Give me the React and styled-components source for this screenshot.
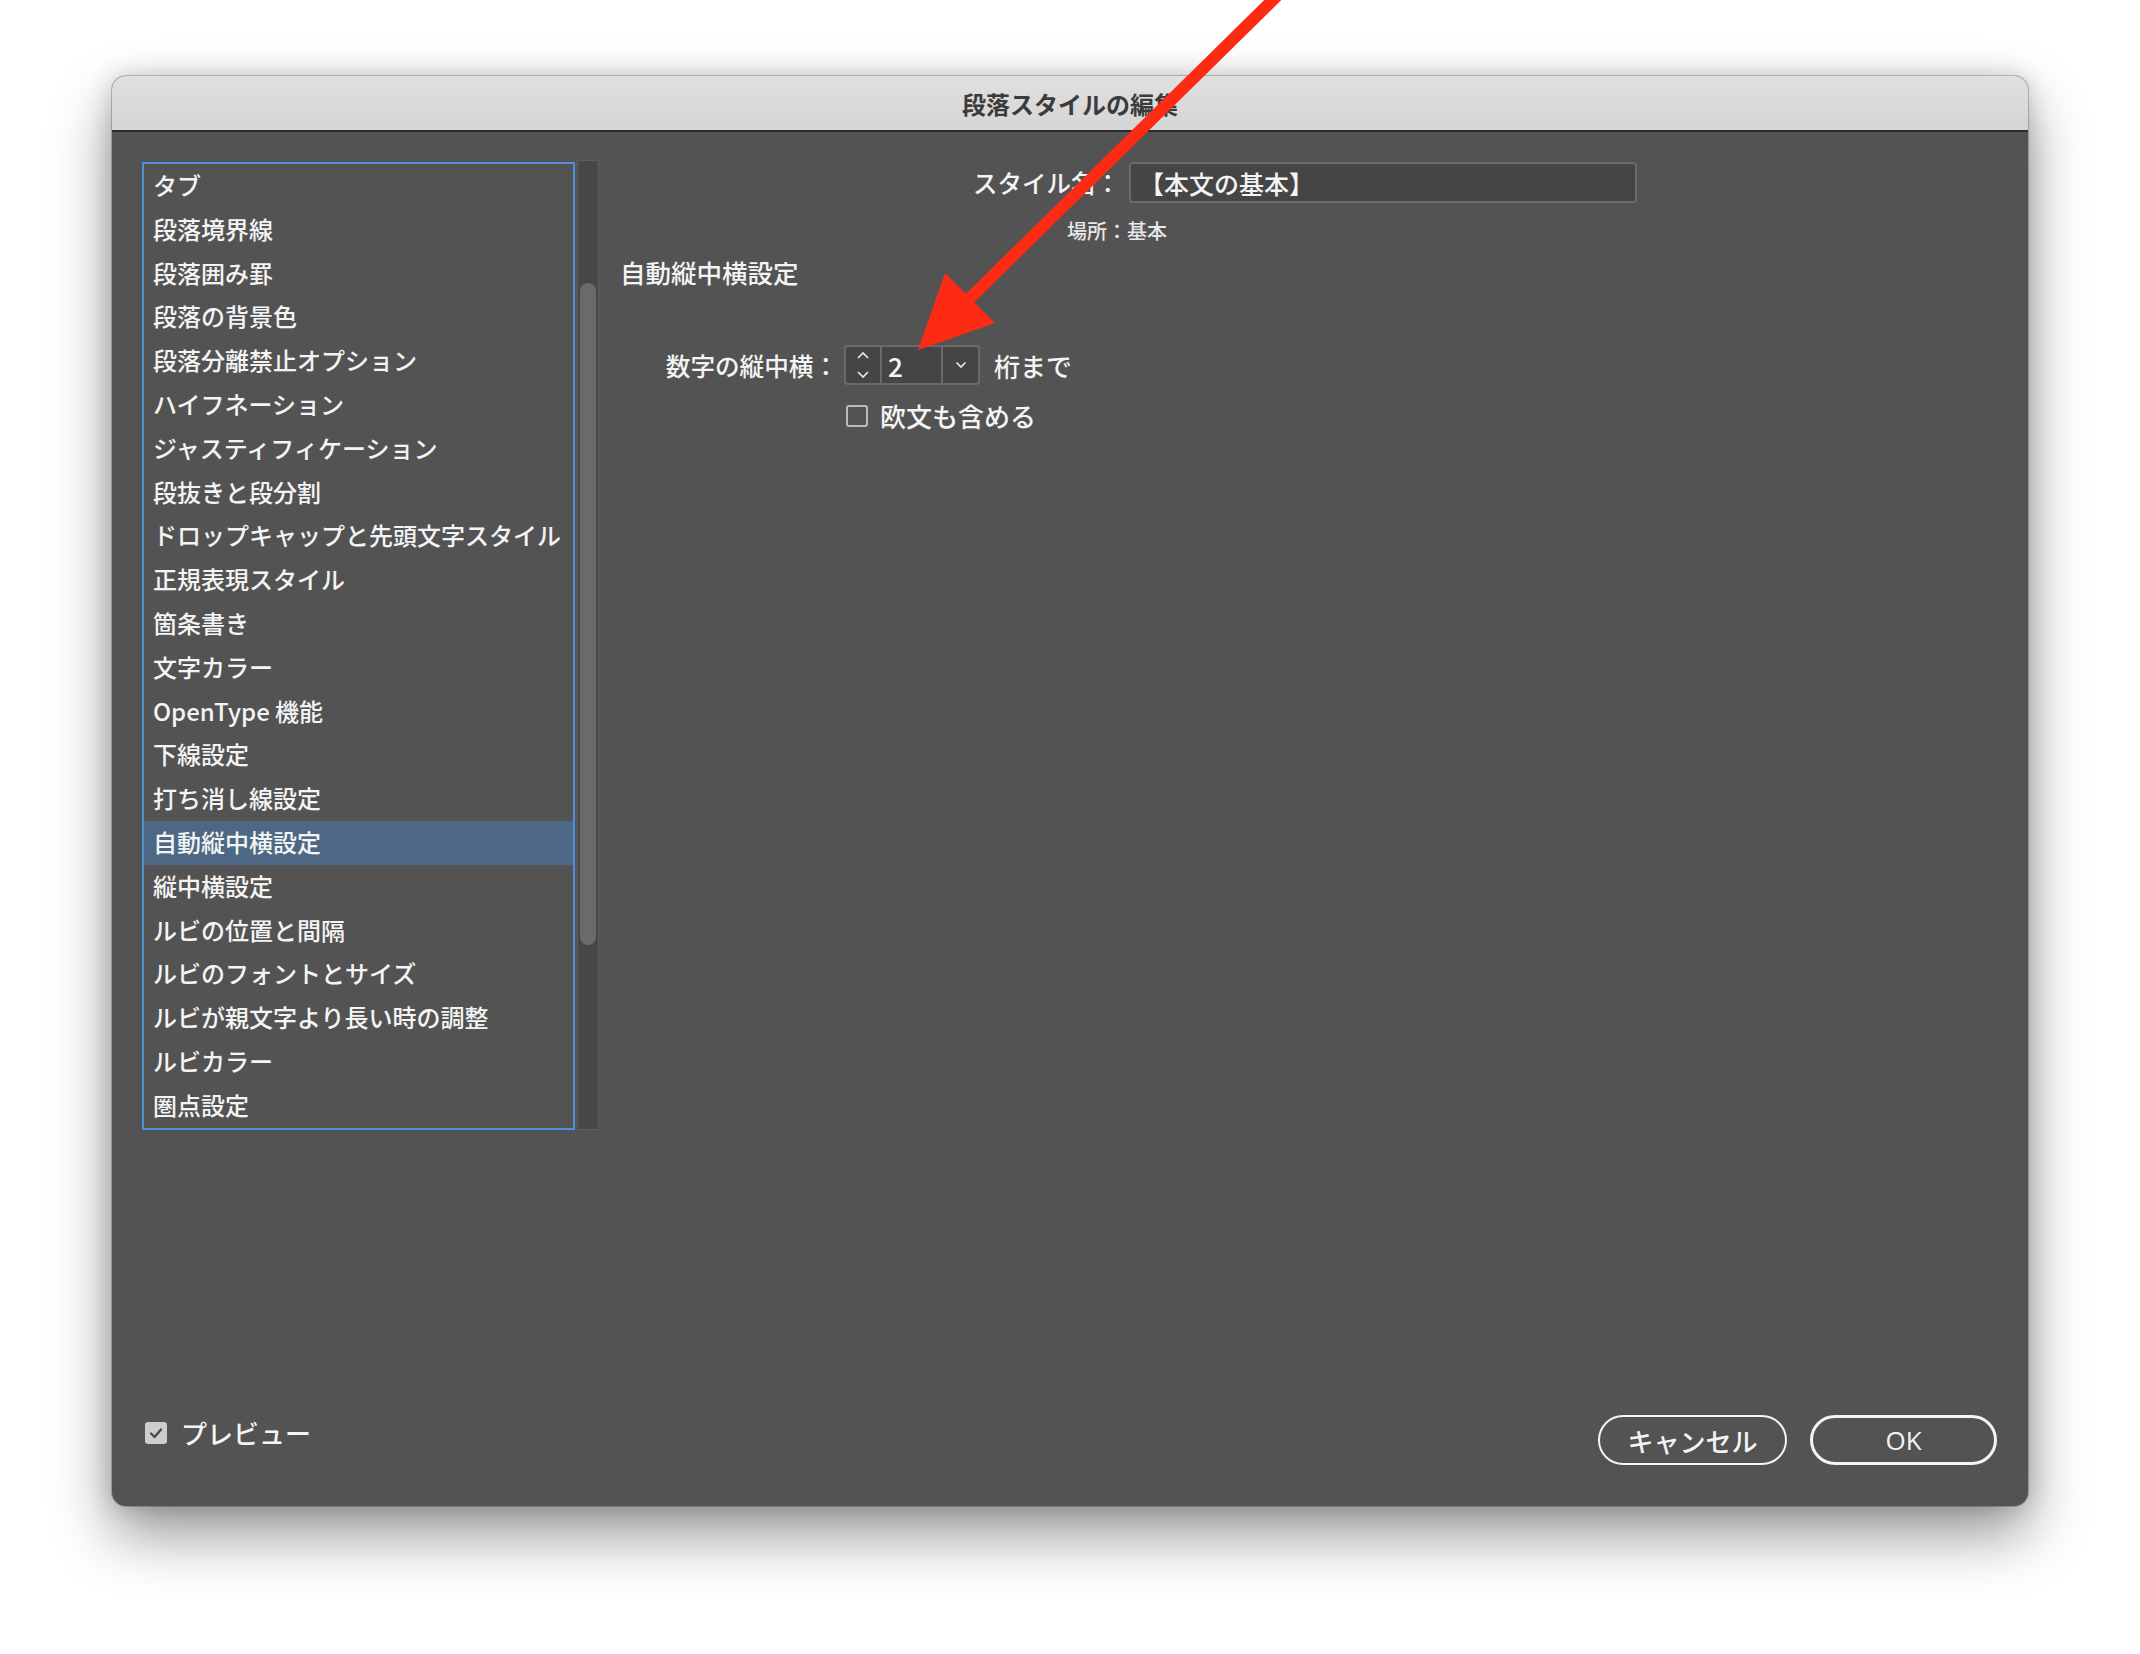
import React from 'react';
import styled, { createGlobalStyle } from 'styled-components';

const GlobalStyle = createGlobalStyle`
  html, body {
    margin: 0;
    padding: 0;
    background: #ffffff;
  }
  body {
    font-family: "Noto Sans CJK JP", "Open Sans", sans-serif;
    -webkit-font-smoothing: antialiased;
  }
`;

const ITEMS = [
  'タブ',
  '段落境界線',
  '段落囲み罫',
  '段落の背景色',
  '段落分離禁止オプション',
  'ハイフネーション',
  'ジャスティフィケーション',
  '段抜きと段分割',
  'ドロップキャップと先頭文字スタイル',
  '正規表現スタイル',
  '箇条書き',
  '文字カラー',
  'OpenType 機能',
  '下線設定',
  '打ち消し線設定',
  '自動縦中横設定',
  '縦中横設定',
  'ルビの位置と間隔',
  'ルビのフォントとサイズ',
  'ルビが親文字より長い時の調整',
  'ルビカラー',
  '圏点設定',
];

const SELECTED = '自動縦中横設定';

const App = () => {
  return (
    <Page>
      <GlobalStyle />
      <Dialog>
        <TitleBar>段落スタイルの編集</TitleBar>
        <Body>
          <MainRow>
            <ListColumn>
              <ListBox>
                {ITEMS.map((item) => (
                  <ListItem key={item} selected={item === SELECTED}>
                    {item}
                  </ListItem>
                ))}
              </ListBox>
              <ScrollTrack>
                <ScrollThumb />
              </ScrollTrack>
            </ListColumn>

            <Panel>
              <StyleRow>
                <StyleLabel>スタイル名：</StyleLabel>
                <NameInput>【本文の基本】</NameInput>
              </StyleRow>
              <Location>場所：基本</Location>
              <SectionTitle>自動縦中横設定</SectionTitle>
              <Separator />
              <DigitRow>
                <DigitLabel>数字の縦中横：</DigitLabel>
                <Spinner>
                  <SpinButtons>
                    <svg width="16" height="32" viewBox="0 0 16 32">
                      <path d="M3 9 L8 4 L13 9" fill="none" stroke="#e6e6e6" strokeWidth="1.7" />
                      <path d="M3 23 L8 28 L13 23" fill="none" stroke="#e6e6e6" strokeWidth="1.7" />
                    </svg>
                  </SpinButtons>
                  <SpinValue>2</SpinValue>
                  <SpinDrop>
                    <svg width="16" height="10" viewBox="0 0 16 10">
                      <path d="M3.5 2.5 L8 7 L12.5 2.5" fill="none" stroke="#e6e6e6" strokeWidth="1.7" />
                    </svg>
                  </SpinDrop>
                </Spinner>
                <Suffix>桁まで</Suffix>
              </DigitRow>
              <CheckRow>
                <CheckBox />
                <CheckText>欧文も含める</CheckText>
              </CheckRow>
            </Panel>
          </MainRow>

          <Footer>
            <PreviewToggle>
              <CheckBox checked>
                <svg width="16" height="14" viewBox="0 0 16 14">
                  <path d="M3 7.5 L6.5 11 L13 3.5" fill="none" stroke="#4a4a4a" strokeWidth="2.4" strokeLinecap="round" strokeLinejoin="round" />
                </svg>
              </CheckBox>
              <CheckText>プレビュー</CheckText>
            </PreviewToggle>
            <Buttons>
              <Button>キャンセル</Button>
              <Button primary>OK</Button>
            </Buttons>
          </Footer>
        </Body>
      </Dialog>

      <Arrow width="2140" height="1654" viewBox="0 0 2140 1654">
        <line x1="1285" y1="-12" x2="962" y2="306" stroke="#fe2b14" strokeWidth="12" />
        <polygon points="918,350 945,273 995,323" fill="#fe2b14" />
      </Arrow>
    </Page>
  );
};

export default App;

const Page = styled.div`
  position: relative;
  width: 2140px;
  height: 1654px;
  padding: 76px 0 0 112px;
  box-sizing: border-box;
  overflow: hidden;
`;

const Dialog = styled.div`
  width: 1916px;
  height: 1430px;
  display: flex;
  flex-direction: column;
  background: #535353;
  border-radius: 14px;
  overflow: hidden;
  box-shadow: 0 28px 60px rgba(0, 0, 0, 0.42), 0 0 24px rgba(0, 0, 0, 0.18),
    0 0 0 1px rgba(0, 0, 0, 0.2);
`;

const TitleBar = styled.div`
  height: 54px;
  flex: 0 0 auto;
  display: flex;
  align-items: center;
  justify-content: center;
  background: linear-gradient(#e0e0e0, #d5d5d5);
  border-top: 1px solid #c4c4c4;
  border-bottom: 2px solid #2b2b2b;
  box-sizing: content-box;
  margin-top: -1px;
  color: #3b3b3b;
  font-size: 24px;
  font-weight: 700;
`;

const Body = styled.div`
  flex: 1;
  display: flex;
  flex-direction: column;
  justify-content: space-between;
  padding: 30px 31px 41px 30px;
  color: #f4f4f4;
  font-weight: 500;
`;

const MainRow = styled.div`
  display: flex;
  gap: 21px;
`;

const ListColumn = styled.div`
  display: flex;
  align-items: stretch;
`;

const ListBox = styled.div`
  width: 429px;
  border: 2px solid #4d90dc;
  display: flex;
  flex-direction: column;
`;

const ListItem = styled.div`
  height: 43.8px;
  line-height: 41px;
  padding-left: 9px;
  font-size: 24px;
  white-space: nowrap;
  color: #f4f4f4;
  background: ${(props) => (props.selected ? '#4c6884' : 'transparent')};
`;

const ScrollTrack = styled.div`
  width: 22px;
  margin-left: 2px;
  margin-top: -2px;
  background: #474747;
  border: 1px solid #5d5d5d;
  padding: 0 2px;
  box-sizing: border-box;
`;

const ScrollThumb = styled.div`
  margin-top: 122px;
  height: 662px;
  border-radius: 10px;
  background: #6a6a6a;
`;

const Panel = styled.div`
  flex: 1;
  display: flex;
  flex-direction: column;
`;

const StyleRow = styled.div`
  display: flex;
  align-items: center;
  height: 41px;
`;

const StyleLabel = styled.div`
  width: 500px;
  text-align: right;
  font-size: 24.5px;
  margin-right: 9px;
`;

const NameInput = styled.div`
  width: 508px;
  height: 41px;
  box-sizing: border-box;
  border: 2px solid #6b6b6b;
  border-radius: 4px;
  background: #454545;
  padding-left: 8px;
  display: flex;
  align-items: center;
  font-size: 25px;
  color: #f4f4f4;
`;

const Location = styled.div`
  margin-top: 15px;
  padding-left: 447px;
  font-size: 20px;
  line-height: 26px;
  color: #e8e8e8;
`;

const SectionTitle = styled.div`
  margin-top: 12px;
  font-size: 25.5px;
  line-height: 32px;
`;

const Separator = styled.div`
  margin-top: 17px;
  margin-right: 20px;
  border-top: 2px dotted #4f4f4f;
`;

const DigitRow = styled.div`
  margin-top: 38px;
  display: flex;
  align-items: center;
`;

const DigitLabel = styled.div`
  width: 218px;
  text-align: right;
  font-size: 24.6px;
  margin-right: 6px;
`;

const Spinner = styled.div`
  display: flex;
  height: 40px;
  box-sizing: border-box;
  border: 2px solid #6a6a6a;
  border-radius: 4px;
  background: #454545;
  overflow: hidden;
`;

const SpinButtons = styled.div`
  width: 34px;
  display: flex;
  align-items: center;
  justify-content: center;
  border-right: 2px solid #6a6a6a;
`;

const SpinValue = styled.div`
  width: 61px;
  padding-left: 6px;
  box-sizing: border-box;
  display: flex;
  align-items: center;
  font-size: 26px;
  color: #f6f6f6;
  border-right: 2px solid #6a6a6a;
`;

const SpinDrop = styled.div`
  width: 35px;
  display: flex;
  align-items: center;
  justify-content: center;
`;

const Suffix = styled.div`
  margin-left: 14px;
  font-size: 26px;
`;

const CheckRow = styled.div`
  margin-top: 16px;
  padding-left: 226px;
  display: flex;
  align-items: center;
  gap: 12px;
`;

const CheckBox = styled.div`
  width: 22px;
  height: 22px;
  box-sizing: border-box;
  border-radius: 3px;
  display: flex;
  align-items: center;
  justify-content: center;
  border: ${(props) => (props.checked ? 'none' : '2px solid #b9b9b9')};
  background: ${(props) => (props.checked ? '#cdcdcd' : 'transparent')};
`;

const CheckText = styled.div`
  font-size: 26px;
  line-height: 30px;
`;

const Footer = styled.div`
  display: flex;
  align-items: center;
  justify-content: space-between;
  padding-left: 3px;
`;

const PreviewToggle = styled.div`
  display: flex;
  align-items: center;
  gap: 14px;
  padding-bottom: 14px;
`;

const Buttons = styled.div`
  display: flex;
  gap: 23px;
`;

const Button = styled.div`
  width: ${(props) => (props.primary ? '187px' : '189px')};
  height: 50px;
  box-sizing: border-box;
  border: ${(props) => (props.primary ? '3px' : '2px')} solid #f4f4f4;
  border-radius: 25px;
  display: flex;
  align-items: center;
  justify-content: center;
  font-size: 26px;
  color: #f4f4f4;
  font-family: ${(props) => (props.primary ? '"Open Sans", "Noto Sans CJK JP", sans-serif' : 'inherit')};
`;

const Arrow = styled.svg`
  position: absolute;
  left: 0;
  top: 0;
  pointer-events: none;
`;
